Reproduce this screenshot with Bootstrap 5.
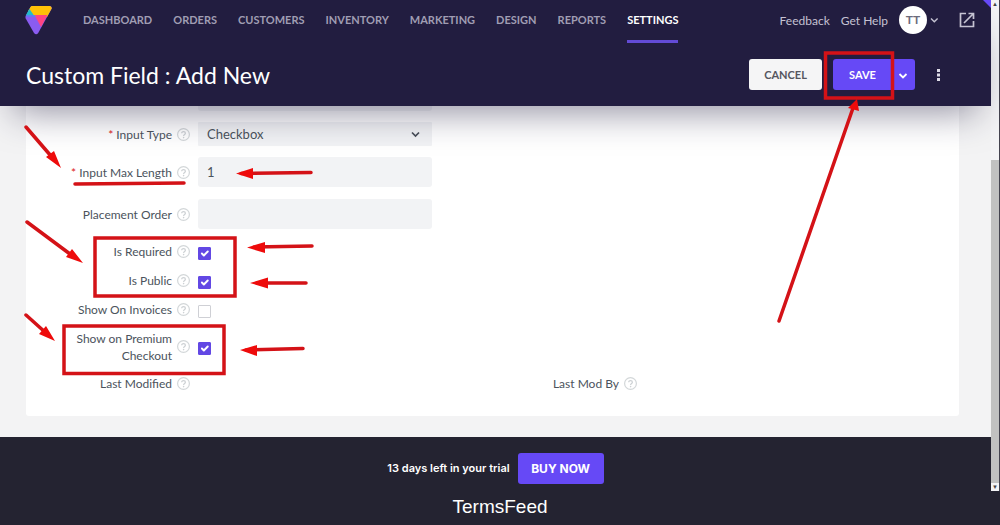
<!DOCTYPE html>
<html lang="en">
<head>
<meta charset="utf-8">
<meta name="viewport" content="width=device-width, initial-scale=1">
<title>Custom Field : Add New</title>
<link href="https://cdn.jsdelivr.net/npm/bootstrap@5.3.0/dist/css/bootstrap.min.css" rel="stylesheet">
<style>
  body { font-family: Lato, "Open Sans", sans-serif; font-size: 12px; line-height: 17px; color: #4b535c; background: #242331; }
  .app-pane { background: #f3f3f4; min-width: 0; }
  .app-header { background: #221d40; box-shadow: 0 20px 36px -14px rgba(34, 29, 64, .5); z-index: 2; }
  .corner-flag { position: absolute; top: 0; right: 0; }
  .top-nav { height: 43px; padding: 0 16px 0 25px; }
  .menu-links { gap: 21px; margin-left: 31px; height: 43px; font: bold 11px/40px Lato, sans-serif; }
  .menu-links a { color: #a09db3; text-decoration: none; border-bottom: 3px solid transparent; }
  .menu-links a.active { color: #fff; border-color: #634bd6; }
  .help-links a { color: #c5c2d3; text-decoration: none; }
  .help-links { gap: 18px; padding-bottom: 3px; }
  .account-group { gap: 11px; }
  .avatar-btn { width: 28px; height: 28px; border-radius: 50%; background: #fff; color: #6c6c7c; font: bold 12px/28px Lato, sans-serif; }
  .bare-btn { border: 0; background: none; padding: 0; display: flex; align-items: center; color: #c5c3d2; }
  .title-bar { height: 63px; padding: 0 47px 0 26px; }
  .title-bar h1 { font-size: 23px; line-height: 32px; font-weight: 400; color: #fff; }
  .btn-app { --bs-btn-border-radius: 3px; --bs-btn-border-width: 0; --bs-btn-padding-y: 0; --bs-btn-padding-x: 0; --bs-btn-font-size: 11px; height: 31px; font-weight: 700; line-height: 31px; white-space: nowrap; }
  .btn-plain { --bs-btn-bg: #f5f5f6; --bs-btn-color: #55565f; --bs-btn-hover-bg: #fff; width: 73px; margin-right: 11px; }
  .btn-violet { --bs-btn-bg: #6649f6; --bs-btn-color: #fff; --bs-btn-hover-bg: #5739e8; --bs-btn-hover-color: #fff; }
  .btn-save { width: 59px; }
  .btn-caret { width: 24px; }
  .btn-more { margin-left: 18px; }
  .form-area { padding: 0 32px 21px 26px; }
  .form-panel { background: #fff; border-radius: 0 0 3px 3px; padding: 0 39px 18px 0; }
  .field-row { display: grid; grid-template-columns: 146px 13px minmax(0, 237px); column-gap: 5px; align-items: center; margin-bottom: 12px; }
  .field-row > label, .field-row > .field-name { text-align: right; }
  .field-row > :nth-child(3) { justify-self: end; width: calc(100% - 3px); }
  .snug-row { margin-bottom: 11px; }
  .check-row { margin: 0; min-height: 29px; }
  .tall-row { min-height: 45px; }
  .star { color: #d22; }
  .app-field { border: 0; border-radius: 3px; background-color: #f2f3f5; color: #4b535c; font-size: 13px; line-height: 18px; padding: 6px 9px; height: 30px; }
  select.app-field { height: 24px; padding: 3px 9px; border-radius: 1px; background-position: right 11px center; background-size: 11px 11px;
    background-image: url("data:image/svg+xml,%3csvg xmlns='http://www.w3.org/2000/svg' viewBox='0 0 11 11'%3e%3cpath d='M2 3.5l3.500 3.500 3.500-3.500' fill='none' stroke='%23484d57' stroke-width='1.700'/%3e%3c/svg%3e"); }
  .field-cut { height: 5px; padding: 0; border-radius: 0 0 3px 3px; }
  .field-row > .form-check-input.app-check { width: 13px; height: 13px; margin: 3px 0 0 3px; justify-self: start; border: 1px solid #cfd0d5; border-radius: 1px; background-size: 13px 13px; }
  .field-row > .form-check-input.app-check:checked { background-color: #6248e4; border-color: #6248e4; }
  .q-icon { width: 13px; height: 13px; display: block; }
  .trial-bar { height: 54px; padding-top: 8px; gap: 8px; color: #fff; background: #242331; font: 600 11px/16px Inter, sans-serif; }
  .trial-bar .btn { font-size: 12px; width: 86px; }
  .scroll-track { width: 9px; background: #f4f4f6; border-right: 1px solid #44434f; }
  .scroll-gap { flex: 32; }
  .scroll-thumb { flex: 68; background: #c1c1c1; }
  .scroll-track button { font-size: 6px; line-height: 8px; color: #444; justify-content: center; }
  .site-caption { height: 34px; color: #fff; font: 19px/32px "Liberation Sans", sans-serif; }
  .marks { position: absolute; top: 0; pointer-events: none; z-index: 3; fill: none; stroke: #d41217; stroke-width: 3.5; stroke-linecap: round; }
  .marks-left { left: 0; }
  .marks-right { right: 0; }
  .marks .tip { fill: #ee0b0b; stroke: none; }
</style>
</head>
<body>
<svg class="d-none">
  <symbol id="q" viewBox="0 0 13 13"><circle cx="6.500" cy="6.500" r="5.900" fill="none" stroke="#d3d7d9" stroke-width="1.200"/><path d="M4.700 5.300c0-2.400 3.700-2.300 3.700 0 0 1.300-1.800 1.300-1.800 2.700" fill="none" stroke="#cdd1d4" stroke-width="1.200"/><circle cx="6.600" cy="9.600" r=".8" fill="#cdd1d4"/></symbol>
</svg>
<div class="d-flex position-relative">
  <div class="app-pane flex-grow-1 d-flex flex-column">
    <header class="app-header position-relative">
      <svg class="corner-flag" width="8" height="8"><path d="M0 0h8v8z" fill="#6649f6"/></svg>
      <nav class="top-nav d-flex justify-content-between">
        <div class="d-flex">
          <a href="#" aria-label="Home" class="d-block pt-1">
            <svg width="27" height="31" viewBox="0 0 27 31"><path d="M7 2h18q2 .5 1.700 2.500L13.200 29q-2 2.600-4.200 0L.7 14.500q-.6-1.500.2-3L5.500 3z" fill="#8a5cf0"/><path d="M7 2h18q2 .5 1.700 2.500L22 13H5L3.200 7 5.500 3Q6 2 7 2z" fill="#ffc107"/><path d="M4.500 5L9 11.500H.8L4 5.500z" fill="#21bccb"/><path d="M9.500 11H22.500L16 23z" fill="#ff4582"/><path d="M1.500 11H9.500L11 13H2z" fill="#5f7bf2"/></svg>
          </a>
          <div class="menu-links d-flex">
            <a href="#">DASHBOARD</a><a href="#">ORDERS</a><a href="#">CUSTOMERS</a><a href="#">INVENTORY</a><a href="#">MARKETING</a><a href="#">DESIGN</a><a href="#">REPORTS</a><a href="#" class="active">SETTINGS</a>
          </div>
        </div>
        <div class="help-links d-flex align-items-center">
          <div class="account-group d-flex align-items-center">
            <a href="#">Feedback</a>
            <a href="#">Get Help</a>
            <button class="bare-btn" aria-label="Account">
              <span class="avatar-btn">TT</span>
              <svg width="14" height="10" viewBox="0 0 14 10"><path d="M4 3.500l3.300 3.300 3.300-3.300" fill="none" stroke="currentColor" stroke-width="1.400"/></svg>
            </button>
          </div>
          <button class="bare-btn" aria-label="Open store">
            <svg width="16" height="16" viewBox="0 0 16 16" fill="none" stroke="currentColor" stroke-width="1.700"><path d="M7 1.500H1.500v13h13V9M9.500 1.500h5V7M14.500 1.500L5 11"/></svg>
          </button>
        </div>
      </nav>
      <div class="title-bar d-flex align-items-center justify-content-between">
        <h1 class="m-0">Custom Field : Add New</h1>
        <div class="d-flex align-items-center">
          <button class="btn btn-app btn-plain">CANCEL</button>
          <div class="btn-group">
            <button class="btn btn-app btn-violet btn-save">SAVE</button>
            <button class="btn btn-app btn-violet btn-caret" aria-label="More save options"><svg width="10" height="10" viewBox="0 0 10 10"><path d="M1.500 3L5 6.500 8.500 3" fill="none" stroke="#fff" stroke-width="1.800"/></svg></button>
          </div>
          <button class="bare-btn btn-more" aria-label="More actions"><svg width="11" height="14" viewBox="0 0 11 14" fill="#dddbe6"><path d="M4 1h3v3H4zM4 5.500h3v3H4zM4 10h3v3H4z"/></svg></button>
        </div>
      </div>
    </header>
    <main class="form-area">
      <form class="form-panel">
        <div class="field-row snug-row"><span></span><span></span><div class="app-field field-cut"></div></div>
        <div class="field-row snug-row">
          <label for="f-type"><span class="star">*</span> Input Type</label><svg class="q-icon"><use href="#q"/></svg>
          <select id="f-type" class="form-select app-field"><option>Checkbox</option></select>
        </div>
        <div class="field-row">
          <label for="f-len"><span class="star">*</span> Input Max Length</label><svg class="q-icon"><use href="#q"/></svg>
          <input id="f-len" class="app-field" type="text" value="1">
        </div>
        <div class="field-row mb-2">
          <label for="f-ord">Placement Order</label><svg class="q-icon"><use href="#q"/></svg>
          <input id="f-ord" class="app-field" type="text">
        </div>
        <div class="field-row check-row">
          <label for="f-req">Is Required</label><svg class="q-icon"><use href="#q"/></svg>
          <input id="f-req" class="form-check-input app-check" type="checkbox" checked>
        </div>
        <div class="field-row check-row">
          <label for="f-pub">Is Public</label><svg class="q-icon"><use href="#q"/></svg>
          <input id="f-pub" class="form-check-input app-check" type="checkbox" checked>
        </div>
        <div class="field-row check-row">
          <label for="f-inv">Show On Invoices</label><svg class="q-icon"><use href="#q"/></svg>
          <input id="f-inv" class="form-check-input app-check" type="checkbox">
        </div>
        <div class="field-row check-row tall-row">
          <label for="f-prem">Show on Premium<br>Checkout</label><svg class="q-icon"><use href="#q"/></svg>
          <input id="f-prem" class="form-check-input app-check" type="checkbox" checked>
        </div>
        <div class="row g-0">
          <div class="col-6"><div class="field-row check-row"><span class="field-name">Last Modified</span><svg class="q-icon"><use href="#q"/></svg></div></div>
          <div class="col-6"><div class="field-row check-row"><span class="field-name">Last Mod By</span><svg class="q-icon"><use href="#q"/></svg></div></div>
        </div>
      </form>
    </main>
    <div class="trial-bar d-flex justify-content-center align-items-center">
      <span>13 days left in your trial</span><button class="btn btn-app btn-violet">BUY NOW</button>
    </div>
  </div>
  <div class="scroll-track d-flex flex-column">
    <button class="bare-btn" tabindex="-1">▲</button>
    <div class="flex-grow-1 d-flex flex-column"><div class="scroll-gap"></div><div class="scroll-thumb"></div></div>
    <button class="bare-btn" tabindex="-1">▼</button>
  </div>
  <svg class="marks marks-left" width="330" height="400">
    <path d="M26 127L51 156M75 184L184 183M241 173.500L311 172.500M27 222L70 254M254 247L312 246M258 283L306 283M26 315L46 333M246 350L303 348.500"/>
    <path d="M95 238H235V296H95zM64 326H224V373.500H64z"/>
    <path class="tip" d="M61 168L46 157 54 151zM236 173.500L253 168V179zM83 263L66 257 72 249zM247 247.500L265 242V253zM250 283L268 277.500V288.500zM55 341L39 334 46 326zM240 350L257 345V356z"/>
  </svg>
  <svg class="marks marks-right" width="240" height="330">
    <path d="M65.500 53H132.500V98H65.500z"/>
    <path d="M19 321L93 108"/><path class="tip" d="M97 99L99 111 88 108z"/>
  </svg>
</div>
<footer class="site-caption text-center">TermsFeed</footer>
<script src="https://cdn.jsdelivr.net/npm/bootstrap@5.3.0/dist/js/bootstrap.bundle.min.js"></script>
</body>
</html>
